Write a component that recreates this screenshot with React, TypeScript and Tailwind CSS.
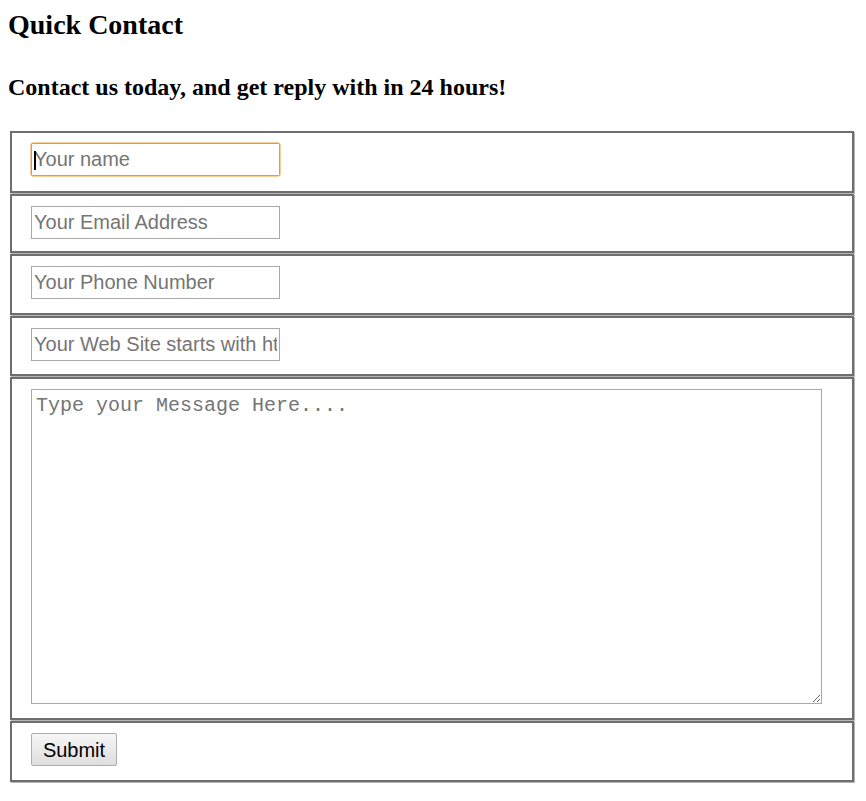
import React from "react";

const rowBox =
  "relative border-2 border-[#6e6e6e] shadow-[1px_1px_0_#b5b5b5] mb-px pl-[19px] pt-[10px]";

const fieldBase =
  "block w-[249px] h-[33px] border border-solid bg-white px-[2px] text-[20px] text-black placeholder:text-[#757575] font-['Liberation_Sans',Arial,sans-serif] outline-none";

const fieldClass = `${fieldBase} border-[color:#a9a9a9]`;

export default function App() {
  return (
    <div className="min-h-[801px] bg-white pl-[8px] pt-[9px] font-['Liberation_Serif',serif] text-black">
      <h2 className="text-[28px] font-bold leading-[32px]">Quick Contact</h2>
      <h3 className="mt-[32px] text-[24px] font-bold leading-[28px]">
        Contact us today, and get reply with in 24 hours!
      </h3>

      <form className="ml-[2px] mt-[30px] w-[844px]" onSubmit={(e) => e.preventDefault()}>
        <div className={`${rowBox} h-[62px]`}>
          <div className="relative h-[33px] w-[249px] rounded-[2px] border border-amber-500 shadow-[0_0_0_0.5px_#e8a026]">
            <input
              type="text"
              placeholder="Your name"
              className="block h-full w-full bg-white px-[2px] text-[20px] text-black placeholder:text-[#757575] font-['Liberation_Sans',Arial,sans-serif] outline-none"
            />
            <span className="pointer-events-none absolute left-[2px] top-[7px] h-[19px] w-[2px] bg-black" />
          </div>
        </div>
        <div className={`${rowBox} h-[59px]`}>
          <input type="email" placeholder="Your Email Address" className={fieldClass} />
        </div>
        <div className={`${rowBox} h-[61px]`}>
          <input type="tel" placeholder="Your Phone Number" className={fieldClass} />
        </div>
        <div className={`${rowBox} h-[60px]`}>
          <input type="url" placeholder="Your Web Site starts with http://" className={fieldClass} />
        </div>
        <div className={`${rowBox} h-[343px]`}>
          <textarea
            placeholder="Type your Message Here...."
            className="block h-[315px] w-[791px] border border-[color:#a9a9a9] bg-white px-[4px] pt-[4px] text-[20px] leading-[24px] placeholder:text-[#757575] font-['Liberation_Mono','Courier_New',monospace] outline-none"
          />
        </div>
        <div className={`${rowBox} h-[61px]`}>
          <button
            type="submit"
            className="h-[33px] w-[86px] rounded-[2px] border border-[color:#adadad] bg-gradient-to-b from-[#f6f6f6] to-[#dedede] text-[20px] text-black font-['Liberation_Sans',Arial,sans-serif]"
          >
            Submit
          </button>
        </div>
      </form>
    </div>
  );
}
